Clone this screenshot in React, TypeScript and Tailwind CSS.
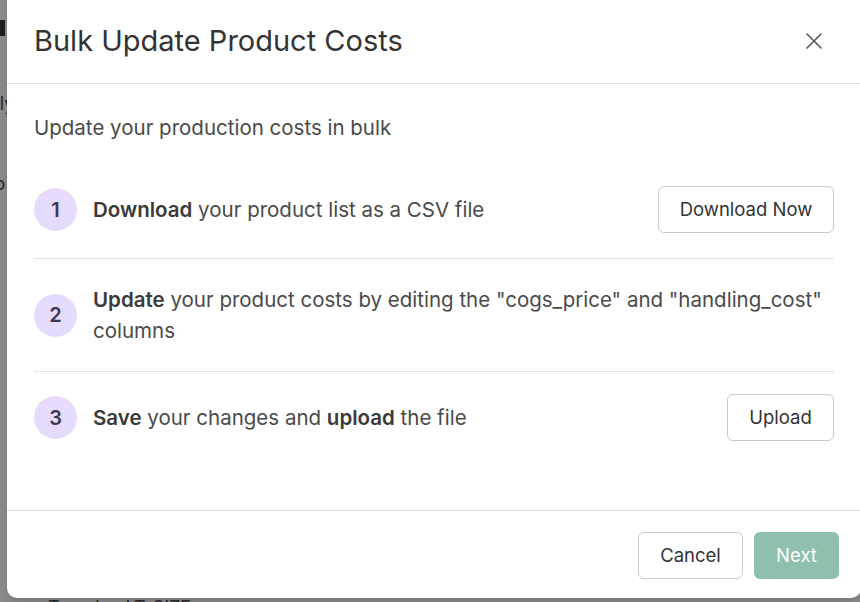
import React from 'react';

const font = { fontFamily: 'Inter, "Noto Sans", "Liberation Sans", sans-serif' };

type Step = {
  n: number;
  content: React.ReactNode;
  action?: { label: string; width: string };
};

const steps: Step[] = [
  {
    n: 1,
    content: (
      <>
        <b className="font-semibold text-[#3a3a3a]">Download</b> your product list as a CSV file
      </>
    ),
    action: { label: 'Download Now', width: 'w-[176px]' },
  },
  {
    n: 2,
    content: (
      <>
        <b className="font-semibold text-[#3a3a3a]">Update</b> your product costs by editing the
        "cogs_price" and "handling_cost" columns
      </>
    ),
  },
  {
    n: 3,
    content: (
      <>
        <b className="font-semibold text-[#3a3a3a]">Save</b> your changes and{' '}
        <b className="font-semibold text-[#3a3a3a]">upload</b> the file
      </>
    ),
    action: { label: 'Upload', width: 'w-[107px]' },
  },
];

function CloseIcon() {
  return (
    <svg width="18" height="18" viewBox="0 0 18 18" fill="none" stroke="#555" strokeWidth="1.6" strokeLinecap="round">
      <path d="M2 2 L16 16 M16 2 L2 16" />
    </svg>
  );
}

function StepRow({ step, last }: { step: Step; last: boolean }) {
  return (
    <div
      className={`flex items-center gap-4 ${last ? 'pb-[25px] pt-[22px]' : 'border-b border-[#e3e3e3] py-[25px]'}`}
    >
      <div className="flex h-[43px] w-[43px] shrink-0 items-center justify-center rounded-full bg-[#e6dbfc] text-[20px] font-semibold text-[#3f3850]">
        {step.n}
      </div>
      <p className="flex-1 text-[20.5px] leading-[31px] text-[#4a4a4a]">{step.content}</p>
      {step.action && (
        <button
          className={`h-[47px] ${step.action.width} shrink-0 rounded-md border border-[#cacaca] bg-white text-[18.5px] text-[#333]`}
        >
          {step.action.label}
        </button>
      )}
    </div>
  );
}

export default function App() {
  return (
    <div className="relative h-[602px] w-[860px] overflow-hidden bg-[#8b8b8b]" style={font}>
      {/* page behind the overlay */}
      <div className="absolute left-0 top-[20px] h-[16px] w-[5px] bg-[#1d1d1d]" />
      <div className="absolute left-[-14px] top-[90px] text-[18px] text-[#2a2a2a]">Oly</div>
      <div className="absolute left-[-12px] top-[170px] text-[18px] text-[#2a2a2a]">ro</div>
      <div className="absolute left-[48px] top-[594px] text-[18px] text-[#2a2a2a]">Tamplee LT-SIZE</div>

      {/* modal */}
      <div className="absolute left-[7px] top-[-10px] flex h-[608px] w-[854px] flex-col rounded-[10px] bg-white shadow-lg">
        <div className="flex h-[94px] shrink-0 items-center justify-between border-b border-[#dedede] pl-[27px] pr-[35px] pt-[8px]">
          <h2 className="text-[29px] font-normal text-[#333]">Bulk Update Product Costs</h2>
          <button className="flex h-[24px] w-[24px] items-center justify-center">
            <CloseIcon />
          </button>
        </div>

        <div className="flex-1 px-[27px] pt-[30px]">
          <p className="text-[20.5px] leading-[28px] text-[#4a4a4a]">Update your production costs in bulk</p>
          <div className="mt-[19px]">
            {steps.map((s, i) => (
              <StepRow key={s.n} step={s} last={i === steps.length - 1} />
            ))}
          </div>
        </div>

        <div className="flex shrink-0 items-center justify-end gap-[11px] border-t border-[#dedede] px-[22px] pb-[19px] pt-[21px]">
          <button className="h-[47px] w-[105px] rounded-md border border-[#cacaca] bg-white text-[18.5px] text-[#333]">
            Cancel
          </button>
          <button className="h-[47px] w-[85px] rounded-md bg-[#8fc0ad] text-[18.5px] text-white">Next</button>
        </div>
      </div>
    </div>
  );
}
